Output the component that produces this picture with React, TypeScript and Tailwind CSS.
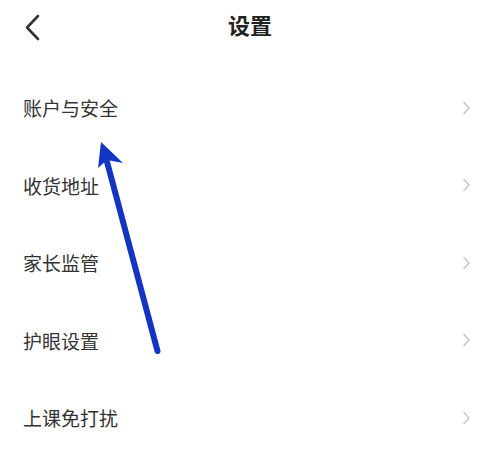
const ITEMS = ['账户与安全', '收货地址', '家长监管', '护眼设置', '上课免打扰'];

function ChevronRight() {
  return (
    <svg width="9" height="14" viewBox="0 0 9 14" fill="none" className="shrink-0">
      <path d="M2 1.5 L7 7 L2 12.5" stroke="#c9c9c9" strokeWidth="1.6" strokeLinecap="round" strokeLinejoin="round" />
    </svg>
  );
}

export default function App() {
  return (
    <div
      className="relative w-[496px] h-[455px] overflow-hidden bg-white text-[#333]"
      style={{ fontFamily: '"Noto Sans CJK SC", "Noto Sans", sans-serif' }}
    >
      <header className="relative h-[69px]">
        <div className="flex items-center justify-center h-12">
          <button type="button" className="absolute left-[20px] top-[10px] p-1">
            <svg width="16" height="28" viewBox="0 0 16 28" fill="none">
              <path d="M14 2 L3 13.5 L14 25" stroke="#333" strokeWidth="2.6" strokeLinecap="round" strokeLinejoin="round" />
            </svg>
          </button>
          <h1 className="text-[22px] font-bold text-[#222] ml-1 leading-none">设置</h1>
        </div>
      </header>

      <ul>
        {ITEMS.map((label) => (
          <li key={label} className="flex items-center justify-between h-[77.5px] pl-[23px] pr-[25px]">
            <span className="text-[19px] leading-none">{label}</span>
            <ChevronRight />
          </li>
        ))}
      </ul>

      {/* annotation arrow drawn over the list */}
      <svg className="absolute inset-0 pointer-events-none" width="496" height="455" viewBox="0 0 496 455">
        <line x1="157.5" y1="351" x2="106" y2="158" stroke="#1434c2" strokeWidth="6" strokeLinecap="round" />
        <path d="M101 142 L123 163 L107 160 L98 168 Z" fill="#1434c2" />
      </svg>
    </div>
  );
}
